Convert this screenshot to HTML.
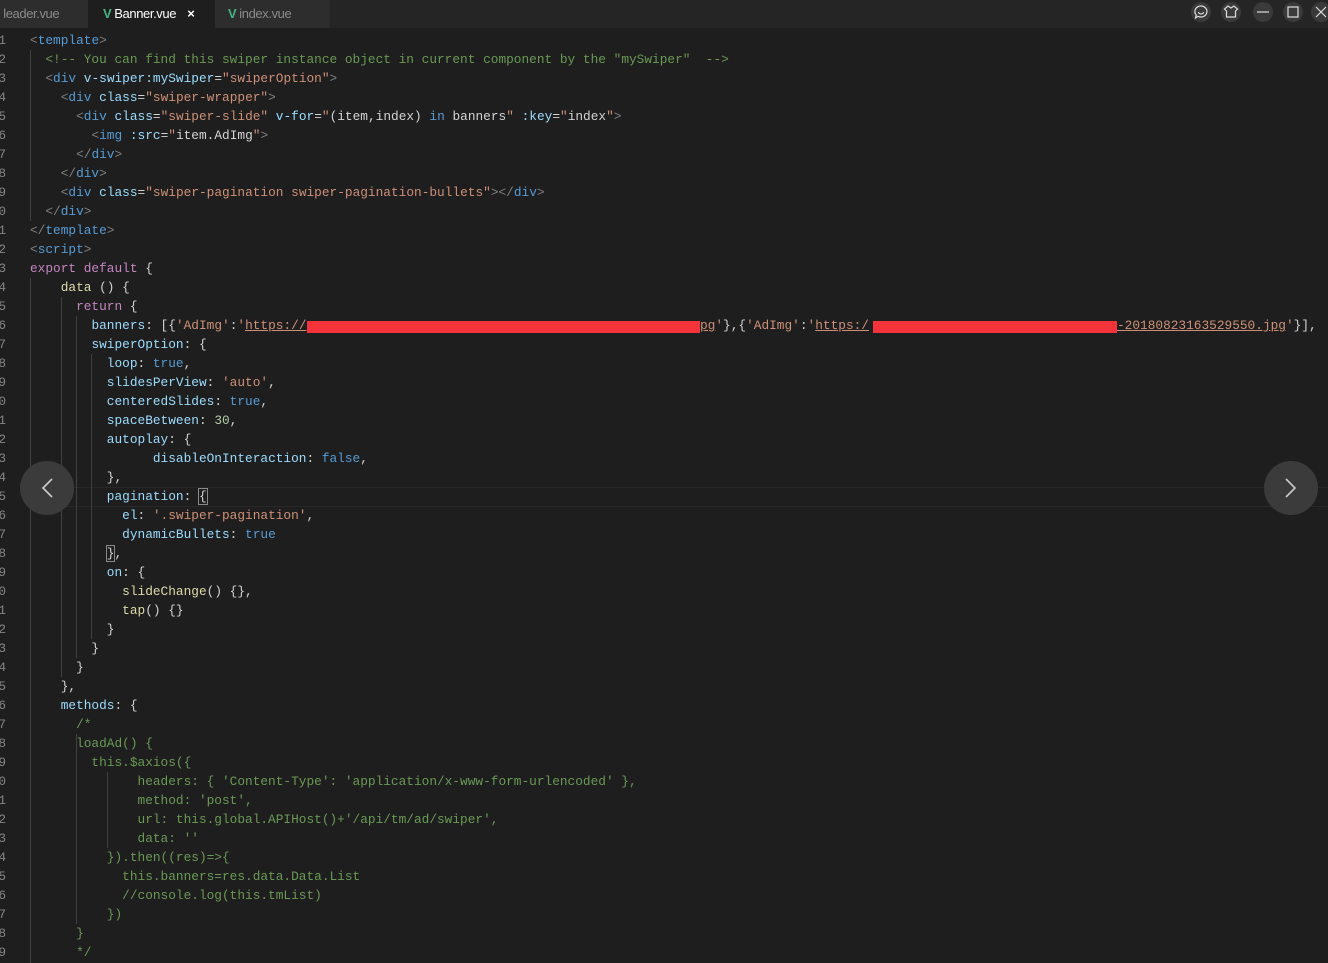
<!DOCTYPE html>
<html><head><meta charset="utf-8"><style>
html,body{margin:0;padding:0;}
body{width:1328px;height:961px;background:#1e1e1e;overflow:hidden;position:relative;font-family:"Liberation Mono",monospace;}
.tabs{position:absolute;left:0;top:0;width:1328px;height:28px;background:#252526;}
.tab{position:absolute;top:0;height:28px;line-height:27px;font-family:"Liberation Sans",sans-serif;font-size:13px;color:#8b8b8b;letter-spacing:-0.4px;}
.v{color:#41b883;font-weight:bold;font-size:13px;margin-right:3px;}
.ln{position:absolute;left:-20px;top:31px;width:26px;text-align:right;font-size:12.8px;line-height:19px;color:#858585;white-space:pre;margin:0;}
pre.code{position:absolute;left:30px;top:31px;margin:0;font-size:12.8px;line-height:19px;color:#d4d4d4;white-space:pre;}
.t{color:#569cd6}.g{color:#808080}.a{color:#9cdcfe}.s{color:#ce9178}.c{color:#6a9955}.k{color:#c586c0}.f{color:#dcdcaa}.b{color:#569cd6}.n{color:#b5cea8}
.u{text-decoration:underline}
.red{position:absolute;background:#f5333a;height:12px;}
.circ{position:absolute;width:54px;height:54px;border-radius:50%;background:#3b3b3b;}
.wb{position:absolute;top:2px;width:20px;height:20px;border-radius:50%;background:#3a3a3a;}
.cur{position:absolute;left:30px;top:487px;width:1298px;height:18px;border-top:1px solid #282828;border-bottom:1px solid #282828;}
.guide{position:absolute;width:1px;background:#404040;}
</style></head><body>
<div class="tabs">
 <div class="tab" style="left:0;width:88px;background:#2d2d2d;padding-left:0;">&nbsp;leader.vue</div>
 <div class="tab" style="left:88px;width:127px;background:#1e1e1e;color:#ffffff;"><span style="padding-left:15px" class="v">V</span>Banner.vue <span style="margin-left:8px;font-weight:bold">×</span></div>
 <div class="tab" style="left:215px;width:115px;background:#2d2d2d;"><span style="padding-left:13px" class="v">V</span>index.vue</div>
 <div class="wb" style="left:1191px"></div>
 <div class="wb" style="left:1221px"></div>
 <div class="wb" style="left:1253px"></div>
 <div class="wb" style="left:1283px"></div>
 <div class="wb" style="left:1311px"></div>
 <svg style="position:absolute;left:1191px;top:2px" width="20" height="20" fill="none" stroke="#ddd" stroke-width="1.2"><path d="M10 4a6 5.5 0 1 1-3 10.3L4.5 16l.8-3A6 5.5 0 0 1 10 4z"/><path d="M7.5 10a2.5 2 0 0 0 5 0"/></svg>
 <svg style="position:absolute;left:1221px;top:2px" width="20" height="20" fill="none" stroke="#ddd" stroke-width="1.2"><path d="M7 4l3 2 3-2 3.5 3-2 2v6h-9V9l-2-2z"/></svg>
 <svg style="position:absolute;left:1253px;top:2px" width="20" height="20" stroke="#ddd" stroke-width="1.2"><path d="M4 10h12"/></svg>
 <svg style="position:absolute;left:1283px;top:2px" width="20" height="20" fill="none" stroke="#ddd" stroke-width="1.2"><rect x="5" y="5" width="10" height="10"/></svg>
 <svg style="position:absolute;left:1311px;top:2px" width="20" height="20" stroke="#ddd" stroke-width="1.2"><path d="M5 5l10 10M15 5L5 15"/></svg>
</div>
<div class="cur"></div>
<div class="guide" style="left:30px;top:50px;height:171px"></div>
<div class="guide" style="left:30px;top:278px;height:685px"></div>
<div class="guide" style="left:61px;top:297px;height:380px"></div>
<div class="guide" style="left:76px;top:316px;height:342px"></div>
<div class="guide" style="left:91px;top:354px;height:285px"></div>
<div class="guide" style="left:76px;top:734px;height:190px"></div>
<div class="guide" style="left:107px;top:772px;height:76px"></div>
<pre class="ln">1
2
3
4
5
6
7
8
9
10
11
12
13
14
15
16
17
18
19
20
21
22
23
24
25
26
27
28
29
30
31
32
33
34
35
36
37
38
39
40
41
42
43
44
45
46
47
48
49</pre>
<pre class="code"><span class="g">&lt;</span><span class="t">template</span><span class="g">&gt;</span>
  <span class="c">&lt;!-- You can find this swiper instance object in current component by the "mySwiper"  --&gt;</span>
  <span class="g">&lt;</span><span class="t">div</span> <span class="a">v-swiper:mySwiper</span>=<span class="s">"swiperOption"</span><span class="g">&gt;</span>
    <span class="g">&lt;</span><span class="t">div</span> <span class="a">class</span>=<span class="s">"swiper-wrapper"</span><span class="g">&gt;</span>
      <span class="g">&lt;</span><span class="t">div</span> <span class="a">class</span>=<span class="s">"swiper-slide"</span> <span class="a">v-for</span>=<span class="s">"</span>(item,index) <span class="t">in</span> banners<span class="s">"</span> <span class="a">:key</span>=<span class="s">"</span>index<span class="s">"</span><span class="g">&gt;</span>
        <span class="g">&lt;</span><span class="t">img</span> <span class="a">:src</span>=<span class="s">"</span>item.AdImg<span class="s">"</span><span class="g">&gt;</span>
      <span class="g">&lt;/</span><span class="t">div</span><span class="g">&gt;</span>
    <span class="g">&lt;/</span><span class="t">div</span><span class="g">&gt;</span>
    <span class="g">&lt;</span><span class="t">div</span> <span class="a">class</span>=<span class="s">"swiper-pagination swiper-pagination-bullets"</span><span class="g">&gt;&lt;/</span><span class="t">div</span><span class="g">&gt;</span>
  <span class="g">&lt;/</span><span class="t">div</span><span class="g">&gt;</span>
<span class="g">&lt;/</span><span class="t">template</span><span class="g">&gt;</span>
<span class="g">&lt;</span><span class="t">script</span><span class="g">&gt;</span>
<span class="k">export default</span> {
    <span class="f">data</span> () {
      <span class="k">return</span> {
        <span class="a">banners</span>: [{<span class="s">'AdImg'</span>:<span class="s">'<span class="u">https://</span></span>
        <span class="a">swiperOption</span>: {
          <span class="a">loop</span>: <span class="b">true</span>,
          <span class="a">slidesPerView</span>: <span class="s">'auto'</span>,
          <span class="a">centeredSlides</span>: <span class="b">true</span>,
          <span class="a">spaceBetween</span>: <span class="n">30</span>,
          <span class="a">autoplay</span>: {
                <span class="a">disableOnInteraction</span>: <span class="b">false</span>,
          },
          <span class="a">pagination</span>: <span style="outline:1px solid #888">{</span>
            <span class="a">el</span>: <span class="s">'.swiper-pagination'</span>,
            <span class="a">dynamicBullets</span>: <span class="b">true</span>
          <span style="outline:1px solid #888">}</span>,
          <span class="a">on</span>: {
            <span class="f">slideChange</span>() {},
            <span class="f">tap</span>() {}
          }
        }
      }
    },
    <span class="a">methods</span>: {
      <span class="c">/*</span>
<span class="c">      loadAd() {</span>
<span class="c">        this.$axios({</span>
<span class="c">              headers: { 'Content-Type': 'application/x-www-form-urlencoded' },</span>
<span class="c">              method: 'post',</span>
<span class="c">              url: this.global.APIHost()+'/api/tm/ad/swiper',</span>
<span class="c">              data: ''</span>
<span class="c">          }).then((res)=&gt;{</span>
<span class="c">            this.banners=res.data.Data.List</span>
<span class="c">            //console.log(this.tmList)</span>
<span class="c">          })</span>
<span class="c">      }</span>
<span class="c">      */</span></pre>
<pre class="code" style="left:700px;top:316px"><span class="s"><span class="u">pg</span>'</span>},{<span class="s">'AdImg'</span>:<span class="s">'<span class="u">https:/</span></span></pre>
<pre class="code" style="left:1117px;top:316px"><span class="s"><span class="u">-20180823163529550.jpg</span>'</span>}],</pre>
<div class="red" style="left:307px;top:321px;width:393px"></div>
<div class="red" style="left:873px;top:321px;width:244px"></div>
<div class="circ" style="left:20px;top:461px"></div>
<div class="circ" style="left:1264px;top:461px"></div>
<svg style="position:absolute;left:20px;top:461px" width="54" height="54" fill="none" stroke="#ccc" stroke-width="1.6"><path d="M32 18l-9 9 9 9"/></svg>
<svg style="position:absolute;left:1264px;top:461px" width="54" height="54" fill="none" stroke="#ccc" stroke-width="1.6"><path d="M22 18l9 9-9 9"/></svg>
</body></html>
